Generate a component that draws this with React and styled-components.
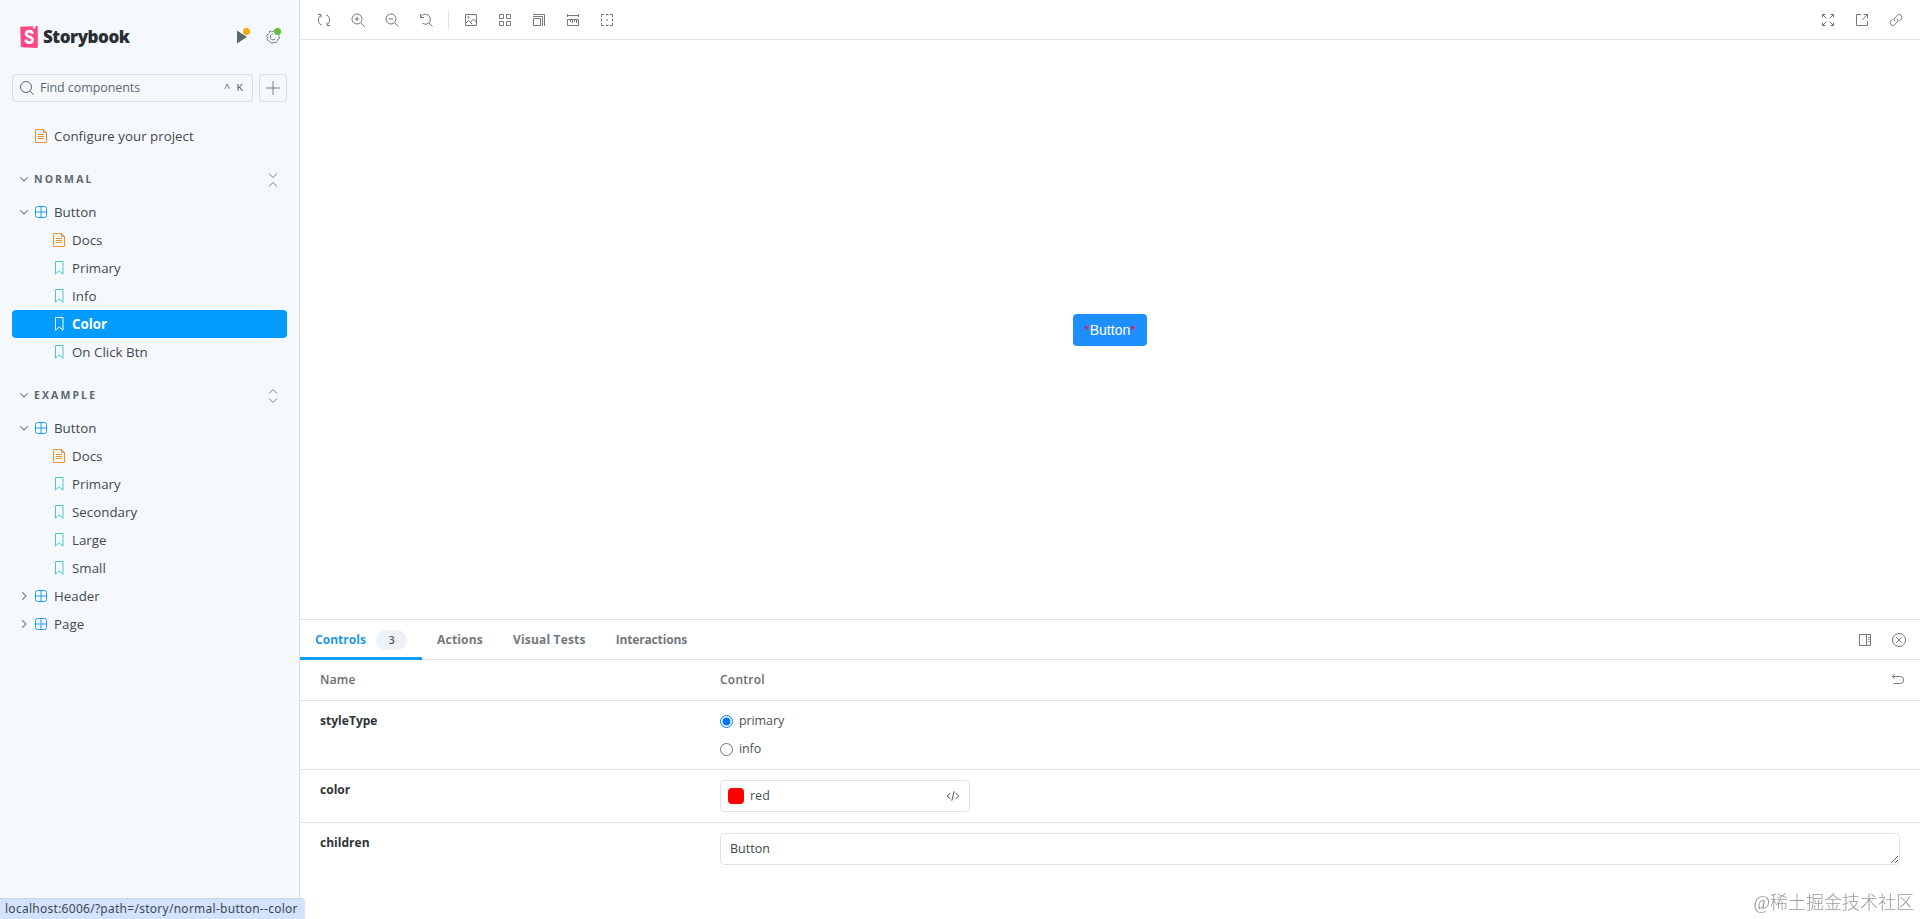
import { useState } from 'react'
import styled, { createGlobalStyle, css } from 'styled-components'

const GlobalStyle = createGlobalStyle`
  *,
  *::before,
  *::after {
    box-sizing: border-box;
  }
  body {
    margin: 0;
    overflow: hidden;
    background: #ffffff;
    color: #2e3438;
    font-family: 'Open Sans', 'Noto Sans', sans-serif;
    font-size: 13px;
  }
  button,
  input,
  textarea {
    font-family: inherit;
  }
`

const Layout = styled.div`
  display: grid;
  grid-template-columns: 300px 1fr;
  height: 100vh;
`

const Sidebar = styled.aside`
  display: flex;
  flex-direction: column;
  padding: 24px 12px 0;
  background: #f6f9fc;
  border-right: 1px solid #d9dfe3;
`

const Brand = styled.header`
  display: flex;
  align-items: center;
  height: 26px;
  padding: 0 7px 0 8px;
`

const BrandName = styled.h1`
  flex: 1;
  margin: 0 0 0 5px;
  font-size: 17px;
  line-height: 26px;
  font-weight: 800;
  letter-spacing: -0.45px;
  color: #2a2f33;
`

const BrandButton = styled.button`
  position: relative;
  display: flex;
  width: 14px;
  height: 14px;
  margin-left: ${props => props.$gap || 0}px;
  padding: 0;
  border: none;
  background: none;
  color: #5c6870;
`

const Dot = styled.span`
  position: absolute;
  top: -2px;
  right: ${props => props.$right}px;
  width: 7px;
  height: 7px;
  border-radius: 50%;
  background: ${props => props.$color};
`

const SearchRow = styled.div`
  display: flex;
  gap: 6px;
  margin-top: 24px;
`

const SearchField = styled.div`
  display: flex;
  align-items: center;
  width: 241px;
  height: 28px;
  padding: 0 9px 0 7px;
  border: 1px solid #d9e0e5;
  border-radius: 4px;
  color: #5c6870;
`

const SearchText = styled.span`
  flex: 1;
  margin-left: 6px;
  padding-bottom: 1px;
  font-size: 12.5px;
  letter-spacing: -0.07px;
`

const Keys = styled.span`
  display: flex;
  gap: 6px;
  font-family: 'Liberation Mono', monospace;
  font-size: 11px;
`

const AddButton = styled.button`
  display: grid;
  place-items: center;
  width: 28px;
  height: 28px;
  padding: 0;
  border: 1px solid #d9e0e5;
  border-radius: 4px;
  background: none;
  color: #73828c;
`

const Tree = styled.nav`
  display: flex;
  flex-direction: column;
  margin-top: 20px;
`

const GroupHeading = styled.div`
  display: flex;
  align-items: center;
  height: 28px;
  margin: 15px 0 5px;
  padding: 0 7px 0 8px;
  color: #73828c;

  & > svg:last-child {
    margin-top: 2px;
  }

  & > span {
    flex: 1;
    margin-left: 6px;
    font-size: 10.5px;
    font-weight: 700;
    letter-spacing: 2.1px;
    color: #5c6870;
  }
`

const Row = styled.div`
  display: flex;
  align-items: center;
  width: 275px;
  height: 28px;
  padding-left: ${props => (props.$nested ? 40 : 8)}px;
  border-radius: 4px;
  color: #42484d;
  font-size: 13.3px;
  letter-spacing: 0.02px;
  ${props =>
    props.$selected &&
    css`
      background: #029cfd;
      color: #ffffff;
      font-weight: 700;
    `}
`

const Arrow = styled.span`
  display: flex;
  width: 8px;
  margin-right: 6px;
  color: #73828c;
`

const TypeIcon = styled.span`
  display: flex;
  margin-right: 6px;
  color: ${props => props.$color};
`

const Main = styled.main`
  display: grid;
  grid-template-rows: 40px 579px 1fr;
  min-width: 0;
`

const Toolbar = styled.div`
  display: flex;
  align-items: center;
  padding: 0 17px;
  border-bottom: 1px solid #dde2e5;
`

const Tools = styled.div`
  display: flex;
  gap: 20px;
  & + & {
    margin-left: auto;
  }
`

const Tool = styled.button`
  display: flex;
  padding: 0;
  border: none;
  background: none;
  color: #73797e;
`

const Separator = styled.span`
  width: 1px;
  height: 20px;
  margin: -3px -5px;
  background: #dde2e5;
`

const Canvas = styled.section`
  display: flex;
  align-items: center;
  justify-content: center;
`

const DemoButton = styled.button`
  display: flex;
  align-items: center;
  justify-content: center;
  width: 74px;
  height: 32px;
  border: none;
  border-radius: 4px;
  background: #1e8fff;
  color: #ffffff;
  font-family: 'Liberation Sans', Arial, sans-serif;
  font-size: 14px;
  &::before,
  &::after {
    content: '*';
    color: #e5105c;
  }
`

const Panel = styled.section`
  display: flex;
  flex-direction: column;
  border-top: 1px solid #dde2e5;
`

const TabBar = styled.div`
  display: flex;
  height: 40px;
  padding-right: 14px;
  border-bottom: 1px solid #dde2e5;
`

const Tab = styled.button`
  display: flex;
  align-items: center;
  height: 40px;
  padding: 2px 15px 0;
  border: none;
  border-bottom: 3px solid ${props => (props.$active ? '#109cf1' : 'transparent')};
  background: none;
  color: ${props => (props.$active ? '#1c98ea' : '#73787d')};
  font-size: 12px;
  font-weight: 700;
  letter-spacing: ${props => props.$track ?? 0.18}px;
`

const Badge = styled.span`
  width: 31px;
  height: 20px;
  margin-left: 10px;
  border-radius: 10px;
  background: #edf2f6;
  color: #52606a;
  font-size: 11px;
  font-weight: 600;
  line-height: 19px;
  text-align: center;
`

const PanelTools = styled.div`
  display: flex;
  align-items: center;
  gap: 20px;
  margin-left: auto;
`

const ArgRow = styled.div`
  display: grid;
  grid-template-columns: 400px 1fr;
  height: ${props => props.$height}px;
  padding: 0 20px;
  border-bottom: ${props => (props.$last ? 'none' : '1px solid #dde2e5')};
  color: #2e3438;
  font-size: 12.5px;
`

const HeadCell = styled.div`
  display: flex;
  align-items: center;
  justify-content: space-between;
  margin-right: ${props => (props.$end ? -5 : 0)}px;
  padding-bottom: 2px;
  color: #666c71;
  font-size: 12px;
  font-weight: 600;
  letter-spacing: 0.25px;
`

const ArgName = styled.div`
  padding-top: 10px;
  font-size: 12px;
  font-weight: 700;
  line-height: 20px;
  letter-spacing: 0.03px;
`

const RadioList = styled.div`
  display: flex;
  flex-direction: column;
  gap: 8px;
  padding-top: 9px;
`

const RadioLabel = styled.label`
  display: flex;
  align-items: center;
  height: 20px;
  color: #4b5257;
  letter-spacing: -0.1px;

  input {
    width: 13px;
    height: 13px;
    margin: 3px 6px 0 0;
  }
`

const ColorField = styled.div`
  display: flex;
  align-items: center;
  width: 250px;
  height: 32px;
  margin-top: 10px;
  padding: 0 9px 0 7px;
  border: 1px solid #dce2e6;
  border-radius: 4px;
  color: #4b5257;
  line-height: 18px;

  svg {
    margin-left: auto;
  }
`

const Swatch = styled.span`
  width: 16px;
  height: 16px;
  margin-right: 6px;
  border-radius: 4px;
  background: #ff0000;
`

const TextField = styled.textarea`
  display: block;
  width: 100%;
  height: 32px;
  margin-top: 10px;
  padding: 6px 9px;
  overflow: hidden;
  border: 1px solid #dce2e6;
  border-radius: 4px;
  outline: none;
  color: #40474c;
  font-size: 12.5px;
  line-height: 18px;
`

const StatusBubble = styled.div`
  position: fixed;
  left: 0;
  bottom: 0;
  width: 305px;
  height: 21px;
  padding-left: 5px;
  border-top: 1px solid #cbd5e6;
  border-radius: 0 4px 0 0;
  background: #d3e3fd;
  color: #40474f;
  font-family: 'Noto Sans', sans-serif;
  font-size: 12px;
  line-height: 19px;
  letter-spacing: 0.27px;
  white-space: nowrap;
`

const Watermark = styled.div`
  position: fixed;
  right: 6px;
  bottom: 2px;
  color: #9b9b9b;
  font-family: 'Liberation Serif', 'Noto Sans CJK SC', sans-serif;
  font-size: 18px;
  font-weight: 300;
  line-height: 28px;
`

const Glyph = ({ size = 14, children, ...props }) => (
  <svg
    width={size}
    height={size}
    viewBox="0 0 14 14"
    fill="none"
    stroke="currentColor"
    {...props}
  >
    {children}
  </svg>
)

const icons = {
  remount: (
    <path d="M5 12.4A5.7 5.7 0 0 1 3.6 2.4M1 1.5h3v3M9 1.6a5.7 5.7 0 0 1 1.400 10M13 12.500h-3v-3" />
  ),
  zoomIn: (
    <path d="M11 6a5 5 0 1 1-10 0 5 5 0 0 1 10 0ZM9.6 9.6l3.9 3.9M6 3.8v4.4M3.8 6h4.4" />
  ),
  zoomOut: (
    <path d="M11 6a5 5 0 1 1-10 0 5 5 0 0 1 10 0ZM9.6 9.6l3.9 3.9M3.8 6h4.4" />
  ),
  zoomReset: (
    <path d="M1.5 1v3.5H5M1.7 4.3A5 5 0 1 1 3.4 10.2M9.7 9.7l3.8 3.8" />
  ),
  photo: (
    <>
      <path d="M1.5 1.5h11v11h-11zM1.5 10.5l3-3 2 2 3-3.5 3 3.5M6 9l2 2" />
      <circle cx="4.5" cy="4.3" r=".7" />
    </>
  ),
  grid: (
    <path d="M1.5 1.5h4v4h-4zM8.5 1.5h4v4h-4zM1.5 8.5h4v4h-4zM8.5 8.5h4v4h-4z" />
  ),
  viewport: <path d="M1.5 5.5h7v7h-7zM1 3.5h9.5V13M1 1.5h11.5V13" />,
  measure: (
    <path d="M1 2.5h12M1.5 1v3M12.5 1v3M1.5 6.5h11v6h-11zM4.5 7v2M6.5 7v3M8.5 7v2M10.5 7v3" />
  ),
  outline: (
    <>
      <path d="M1.5 4V1.5H4M10 1.5h2.5V4M12.5 10v2.5H10M4 12.5H1.5V10M5.5 1.5h3M5.5 12.5h3M1.5 5.5v3M12.5 5.5v3" />
      <path d="M6.3 7h1.4" strokeWidth="1.4" />
    </>
  ),
  expand: (
    <path d="M1.5 4.5v-3h3M1.5 1.5L5.5 5.5M9.5 1.5h3v3M12.5 1.5l-4 4M1.5 9.5v3h3M1.5 12.5l4-4M9.5 12.5h3v-3M12.5 12.5l-4-4" />
  ),
  share: <path d="M6 1.5H1.5v11h11V8M8.5 1.5h4v4M12.5 1.5L7.3 6.7" />,
  link: (
    <path d="M5.800 8.500a2.500 2.500 0 0 1 0-3.500l2.800-2.800a2.700 2.700 0 0 1 3.800 3.800l-2 2M8.200 5.500a2.500 2.500 0 0 1 0 3.500l-2.800 2.800a2.700 2.700 0 0 1-3.800-3.800l2-2" />
  ),
  sidebar: (
    <path d="M1.5 1.5h11v11h-11zM8.5 1.5v11M10 4.5h1.5M10 6.5h1.5M10 8.5h1.5" />
  ),
  close: (
    <>
      <circle cx="7" cy="7" r="6.5" />
      <path d="M4.3 4.3l5.4 5.4M9.7 4.3L4.3 9.7" />
    </>
  ),
  undo: (
    <path d="M3.8 2L1.300 4.500l2.500 2.500M1.500 4.500h7.700a3.500 3.500 0 0 1 0 7H2.500" />
  ),
  document: (
    <>
      <path d="M1.500 .5h8l3 3v10h-11zM9.500 .5v3h3" />
      <path d="M4 5.5h6M4 7.5h6M4 9.5h6" />
    </>
  ),
  component: (
    <>
      <rect x="1.5" y="1.5" width="11" height="11" rx="2" />
      <path d="M7 1.5v11M1.5 7h11" />
    </>
  ),
  bookmark: <path d="M3.500 .5h7.500v12.700L7.200 10 3.500 13.200z" />,
  search: (
    <>
      <circle cx="6" cy="6" r="5.5" />
      <path d="M10 10l3.7 3.7" />
    </>
  ),
  plus: <path d="M7 0v14M0 7h14" />,
  collapse: <path d="M3 .5l4 4 4-4M3 13.5l4-4 4 4" />,
  expandAll: <path d="M3 4.5l4-4 4 4M3 9.5l4 4 4-4" />,
  down: <path d="M.5 4L7 10.500 13.500 4" strokeWidth="2" />,
  right: <path d="M4 .5L10.500 7 4 13.500" strokeWidth="2" />,
  markup: (
    <path d="M4.3 4.2L1.2 7l3.1 2.8M9.7 4.2L12.8 7 9.7 9.8M8.2 2.3l-2.4 9.4" />
  ),
  play: <path d="M1 .5v13L11 7z" fill="currentColor" stroke="none" />,
  gear: (
    <>
      <circle cx="7" cy="7" r="6.3" strokeDasharray="2.5 2.448" />
      <circle
        cx="7"
        cy="7"
        r="5.5"
        strokeDasharray="2.16 2.16"
        strokeDashoffset="2.16"
        strokeWidth=".9"
      />
      <path d="M9.3 8.8a2.9 2.9 0 1 1-2.6-4.700" strokeWidth=".9" />
    </>
  ),
}

const Icon = ({ name, ...props }) => <Glyph {...props}>{icons[name]}</Glyph>

const Logo = () => (
  <svg width="18" height="22" viewBox="0 0 18 22">
    <path
      d="M.2 1.5Q.2.9.9.8L16.8 0q1 0 1 .9v20.2q0 .8-1 .8L1.8 21.3q-.8 0-.9-.8z"
      fill="#ff4785"
    />
    <path d="M13 0l2.2-.1.1 3-1-.8-1.3.9z" fill="#fff" />
    <path
      d="M12.3 8c0-2-1.2-2.900-3.100-2.900S6.100 6.200 6.100 7.700c0 3.600 6.400 2.600 6.400 6.100 0 1.900-1.400 2.900-3.300 2.900S5.700 15.600 5.800 13.500"
      fill="none"
      stroke="#fff"
      strokeWidth="2.8"
    />
  </svg>
)

const groups = [
  {
    title: 'NORMAL',
    icon: 'collapse',
    rows: [
      { type: 'component', label: 'Button', open: true },
      { type: 'document', label: 'Docs' },
      { type: 'bookmark', label: 'Primary' },
      { type: 'bookmark', label: 'Info' },
      { type: 'bookmark', label: 'Color' },
      { type: 'bookmark', label: 'On Click Btn' },
    ],
  },
  {
    title: 'EXAMPLE',
    icon: 'expandAll',
    rows: [
      { type: 'component', label: 'Button', open: true },
      { type: 'document', label: 'Docs' },
      { type: 'bookmark', label: 'Primary' },
      { type: 'bookmark', label: 'Secondary' },
      { type: 'bookmark', label: 'Large' },
      { type: 'bookmark', label: 'Small' },
      { type: 'component', label: 'Header' },
      { type: 'component', label: 'Page' },
    ],
  },
]

const typeColors = {
  component: '#219bec',
  document: '#e8912d',
  bookmark: '#45cbc5',
}

const TreeRow = ({ type, label, open, selected }) => (
  <Row $nested={type !== 'component'} $selected={selected}>
    {type === 'component' && (
      <Arrow>
        <Icon name={open ? 'down' : 'right'} size={8} />
      </Arrow>
    )}
    <TypeIcon $color={selected ? '#ffffff' : typeColors[type]}>
      <Icon name={type} />
    </TypeIcon>
    {label}
  </Row>
)

const StorySidebar = () => (
  <Sidebar>
    <Brand>
      <Logo />
      <BrandName>Storybook</BrandName>
      <BrandButton>
        <Icon name="play" />
        <Dot $color="#f5a800" $right={0} />
      </BrandButton>
      <BrandButton $gap={16}>
        <Icon name="gear" />
        <Dot $color="#66bf3c" $right={-1} />
      </BrandButton>
    </Brand>
    <SearchRow>
      <SearchField>
        <Icon name="search" />
        <SearchText>Find components</SearchText>
        <Keys>
          <span>^</span>
          <span>K</span>
        </Keys>
      </SearchField>
      <AddButton>
        <Icon name="plus" />
      </AddButton>
    </SearchRow>
    <Tree>
      <Row>
        <Arrow />
        <TypeIcon $color={typeColors.document}>
          <Icon name="document" />
        </TypeIcon>
        Configure your project
      </Row>
      {groups.map(group => (
        <div key={group.title}>
          <GroupHeading>
            <Icon name="down" size={8} />
            <span>{group.title}</span>
            <Icon name={group.icon} />
          </GroupHeading>
          {group.rows.map(row => (
            <TreeRow key={row.label} {...row} selected={row.label === 'Color'} />
          ))}
        </div>
      ))}
    </Tree>
  </Sidebar>
)

const ControlsPanel = () => {
  const [styleType, setStyleType] = useState('primary')
  const [children, setChildren] = useState('Button')

  return (
    <Panel>
      <TabBar>
        <Tab $active $track={0.05}>
          Controls
          <Badge>3</Badge>
        </Tab>
        <Tab>Actions</Tab>
        <Tab>Visual Tests</Tab>
        <Tab $track={-0.15}>Interactions</Tab>
        <PanelTools>
          <Tool>
            <Icon name="sidebar" />
          </Tool>
          <Tool>
            <Icon name="close" />
          </Tool>
        </PanelTools>
      </TabBar>
      <ArgRow $height={41}>
        <HeadCell>Name</HeadCell>
        <HeadCell $end>
          Control
          <Tool>
            <Icon name="undo" />
          </Tool>
        </HeadCell>
      </ArgRow>
      <ArgRow $height={69}>
        <ArgName>styleType</ArgName>
        <RadioList>
          {['primary', 'info'].map(option => (
            <RadioLabel key={option}>
              <input
                type="radio"
                name="styleType"
                checked={styleType === option}
                onChange={() => setStyleType(option)}
              />
              {option}
            </RadioLabel>
          ))}
        </RadioList>
      </ArgRow>
      <ArgRow $height={53}>
        <ArgName>color</ArgName>
        <ColorField>
          <Swatch />
          red
          <Icon name="markup" />
        </ColorField>
      </ArgRow>
      <ArgRow $height={53} $last>
        <ArgName>children</ArgName>
        <TextField
          value={children}
          spellCheck={false}
          onChange={e => setChildren(e.target.value)}
        />
      </ArgRow>
    </Panel>
  )
}

const App = () => (
  <>
    <GlobalStyle />
    <Layout>
      <StorySidebar />
      <Main>
        <Toolbar>
          <Tools>
            {['remount', 'zoomIn', 'zoomOut', 'zoomReset'].map(name => (
              <Tool key={name}>
                <Icon name={name} />
              </Tool>
            ))}
            <Separator />
            {['photo', 'grid', 'viewport', 'measure', 'outline'].map(name => (
              <Tool key={name}>
                <Icon name={name} />
              </Tool>
            ))}
          </Tools>
          <Tools>
            {['expand', 'share', 'link'].map(name => (
              <Tool key={name}>
                <Icon name={name} />
              </Tool>
            ))}
          </Tools>
        </Toolbar>
        <Canvas>
          <DemoButton>Button</DemoButton>
        </Canvas>
        <ControlsPanel />
      </Main>
    </Layout>
    <StatusBubble>localhost:6006/?path=/story/normal-button--color</StatusBubble>
    <Watermark>@稀土掘金技术社区</Watermark>
  </>
)

export default App
